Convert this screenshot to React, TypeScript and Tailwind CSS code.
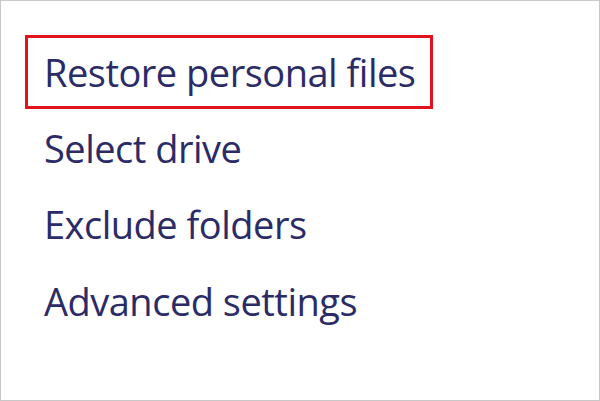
export default function App() {
  const font = { fontFamily: '"Open Sans", "Noto Sans", sans-serif' };
  return (
    <div className="w-[600px] h-[401px] bg-white border border-[#c8c8c8] box-border overflow-hidden">
      <div className="flex flex-col pl-[24px] pt-[34px] text-[38px] tracking-[-0.5px] text-[#2b2b68]" style={font}>
        <div className="w-[408px] h-[74px] border-[3px] border-[#e3101e] pl-[16px] leading-[68px] mb-[2px] whitespace-nowrap">
          Restore personal files
        </div>
        <div className="h-[76px] leading-[75px] pl-[19px] whitespace-nowrap">Select drive</div>
        <div className="h-[76px] leading-[75px] pl-[19px] whitespace-nowrap">Exclude folders</div>
        <div className="h-[76px] leading-[77px] pl-[19px] whitespace-nowrap">Advanced settings</div>
      </div>
    </div>
  );
}
